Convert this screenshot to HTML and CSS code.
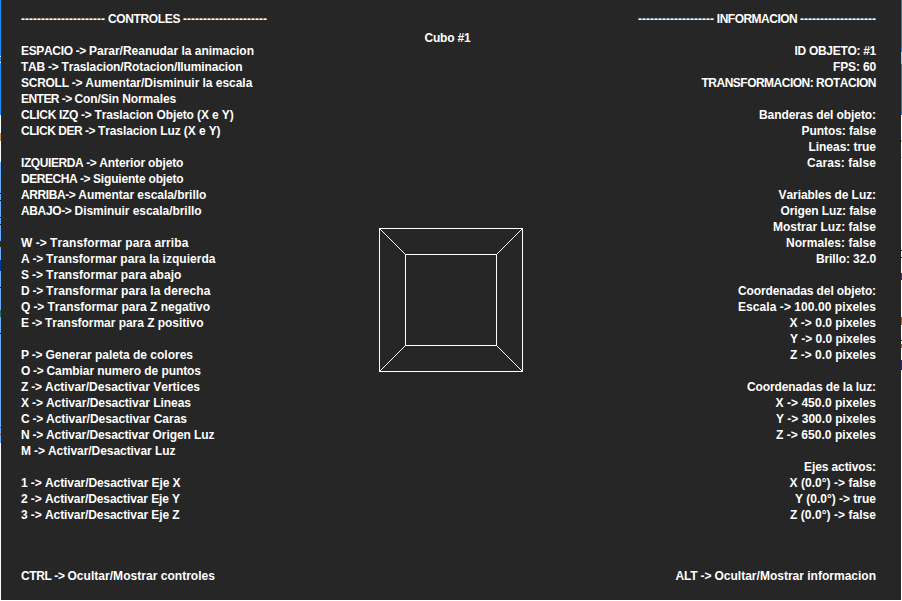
FILE: index.html
```html
<!DOCTYPE html>
<html lang="es">
<head>
<meta charset="utf-8">
<title>Cubo #1</title>
<link rel="stylesheet" href="styles.css">
</head>
<body>
<div class="edge edge-left"></div>
<main class="window">
<section class="panel controls">
<pre class="lines"><span data-w="84">---------------------</span><span data-w="78"> CONTROLES </span><span data-w="84">---------------------</span>

<span data-w="68">ESPACIO -&gt; </span><span data-w="165">Parar/Reanudar la animacion</span>
<span data-w="40.5">TAB -&gt; </span><span data-w="181">Traslacion/Rotacion/Iluminacion</span>
<span data-w="64.300">SCROLL -&gt; </span><span data-w="167">Aumentar/Disminuir la escala</span>
<span data-w="53.500">ENTER -&gt; </span><span data-w="101.500">Con/Sin Normales</span>
<span data-w="73.500">CLICK IZQ -&gt; </span><span data-w="139">Traslacion Objeto (X e Y)</span>
<span data-w="77">CLICK DER -&gt; </span><span data-w="122.500">Traslacion Luz (X e Y)</span>

<span data-w="78.300">IZQUIERDA -&gt; </span><span data-w="84">Anterior objeto</span>
<span data-w="72">DERECHA -&gt; </span><span data-w="90.500">Siguiente objeto</span>
<span data-w="57.300">ARRIBA-&gt; </span><span data-w="128">Aumentar escala/brillo</span>
<span data-w="53.500">ABAJO-&gt; </span><span data-w="127">Disminuir escala/brillo</span>

<span data-w="29">W -&gt; </span><span data-w="138.500">Transformar para arriba</span>
<span data-w="25">A -&gt; </span><span data-w="169.500">Transformar para la izquierda</span>
<span data-w="25">S -&gt; </span><span data-w="135.500">Transformar para abajo</span>
<span data-w="25">D -&gt; </span><span data-w="164.500">Transformar para la derecha</span>
<span data-w="26.500">Q -&gt; </span><span data-w="162.500">Transformar para Z negativo</span>
<span data-w="24">E -&gt; </span><span data-w="158.500">Transformar para Z positivo</span>

<span data-w="24.500">P -&gt; </span><span data-w="147.500">Generar paleta de colores</span>
<span data-w="25.500">O -&gt; </span><span data-w="154.500">Cambiar numero de puntos</span>
<span data-w="24">Z -&gt; </span><span data-w="155">Activar/Desactivar Vertices</span>
<span data-w="25">X -&gt; </span><span data-w="145">Activar/Desactivar Lineas</span>
<span data-w="25">C -&gt; </span><span data-w="141">Activar/Desactivar Caras</span>
<span data-w="25">N -&gt; </span><span data-w="168.500">Activar/Desactivar Origen Luz</span>
<span data-w="27">M -&gt; </span><span data-w="127.500">Activar/Desactivar Luz</span>

<span data-w="24">1 -&gt; </span><span data-w="135.500">Activar/Desactivar Eje X</span>
<span data-w="24">2 -&gt; </span><span data-w="135">Activar/Desactivar Eje Y</span>
<span data-w="24">3 -&gt; </span><span data-w="134.500">Activar/Desactivar Eje Z</span></pre>
<p class="hint"><span data-w="46.500">CTRL -&gt; </span><span data-w="147.500">Ocultar/Mostrar controles</span></p>
</section>
<section class="stage">
<h1 class="title"><span data-w="46">Cubo #1</span></h1>
<svg class="cube" width="144" height="144" viewBox="0 0 144 144" fill="none" stroke="#fff" shape-rendering="crispEdges"><path d="M.5.5h143v143H.5zM26.500 26.500h91v91h-91zM.5.5l26 26M143.500.5l-26 26M.5 143.500l26-26M143.500 143.500l-26-26"/></svg>
</section>
<section class="panel info">
<pre class="lines"><span data-w="76">-------------------</span><span data-w="86">&nbsp;INFORMACION </span><span data-w="76">-------------------</span>

<span data-w="81.500">ID OBJETO: #1</span>
<span data-w="43">FPS: 60</span>
<span data-w="174.500">TRANSFORMACION: ROTACION</span>

<span data-w="117">Banderas del objeto:</span>
<span data-w="74.500">Puntos: false</span>
<span data-w="67.500">Lineas: true</span>
<span data-w="69">Caras: false</span>

<span data-w="97.500">Variables de Luz:</span>
<span data-w="95.500">Origen Luz: false</span>
<span data-w="103">Mostrar Luz: false</span>
<span data-w="90">Normales: false</span>
<span data-w="60">Brillo: 32.0</span>

<span data-w="138">Coordenadas del objeto:</span>
<span data-w="138">Escala -&gt; 100.00 pixeles</span>
<span data-w="86.500">X -&gt; 0.0 pixeles</span>
<span data-w="86">Y -&gt; 0.0 pixeles</span>
<span data-w="86">Z -&gt; 0.0 pixeles</span>

<span data-w="129">Coordenadas de la luz:</span>
<span data-w="100.500">X -&gt; 450.0 pixeles</span>
<span data-w="100">Y -&gt; 300.0 pixeles</span>
<span data-w="100">Z -&gt; 650.0 pixeles</span>

<span data-w="72">Ejes activos:</span>
<span data-w="86.500">X (0.0°) -&gt; false</span>
<span data-w="81">Y (0.0°) -&gt; true</span>
<span data-w="86">Z (0.0°) -&gt; false</span></pre>
<p class="hint"><span data-w="39">ALT -&gt; </span><span data-w="161.500">Ocultar/Mostrar informacion</span></p>
</section>
</main>
<div class="edge edge-right"></div>
<div class="edge edge-bottom"></div>
<script src="fit.js"></script>
</body>
</html>
```

FILE: fit.js
```js
// Tracks each run of text so that it advances by its data-w width.
const runs = [...document.querySelectorAll("[data-w]")];
const widths = runs.map((run) => run.getBoundingClientRect().width);
runs.forEach((run, i) => {
  const gap = (Number(run.dataset.w) - widths[i]) / run.textContent.length;
  run.style.letterSpacing = gap.toFixed(3) + "px";
});
```

FILE: styles.css
```css
* { box-sizing: border-box; }
body {
  display: grid;
  grid-template: 600px 1px / 1px 900px 1px;
  margin: 0;
  background: #fff;
}
.window {
  display: grid;
  grid-template-columns: 280px 1fr 280px;
  padding: 11px 25px 16px 20px;
  background: #262626;
  color: #fff;
  font: bold 12px/16px "Liberation Sans", Arial, sans-serif;
  overflow: hidden;
}
.panel { display: flex; flex-direction: column; justify-content: space-between; }
.lines { margin: 0; font: inherit; font-kerning: none; }
.hint { margin: 0; white-space: pre; }
.info { text-align: right; }
.stage { display: flex; flex-direction: column; align-items: center; padding: 19px 0 0 5px; }
.title { margin: 0 0 0 -7px; font: inherit; }
.cube { flex: none; margin-top: 182px; }
.edge-left {
  background: linear-gradient(#1e8fff 56px, #fff 56px 57px, #1e8fff 57px 62px, #fff 62px 63px, #1e8fff 63px 115px, #fff 115px 133px, #c89664 133px 141px, #fff 141px 162px, #66b0ff 162px 193px, #111 193px 194px, #66b0ff 194px 200px, #111 200px 201px, #66b0ff 201px 217px, #111 217px 218px, #66b0ff 218px 224px, #111 224px 225px, #66b0ff 225px 241px, #332b10 241px 247px, #66b0ff 247px 260px, #0038a8 260px 271px, #66b0ff 271px 287px, #111 287px 288px, #66b0ff 288px 310px, #336b68 310px 317px, #66b0ff 317px 333px, #111 333px 334px, #66b0ff 334px 427px, #c22 427px 428px, #66b0ff 428px 434px, #c22 434px 435px, #66b0ff 435px 443px, #fff 443px);
}
.edge-right {
  background: linear-gradient(#2080d8 52px, #a0d4dc 52px 64px, #2080d8 64px 115px, #fff 115px 140px, #e4b888 140px 142px, #fff 142px 157px, #ccc 157px 158px, #fff 158px 250px, #223 250px 251px, #fff 251px 257px, #223 257px 258px, #fff 258px 273px, #403060 273px 280px, #fff 280px 317px, #b87040 317px 325px, #fff 325px 340px, #223 340px 341px, #fff 341px 344px, #a08050 344px 348px, #fff 348px 360px, #302870 360px 370px, #fff 370px);
}
.edge-bottom { grid-column: 1 / -1; background: #fff; }
```
